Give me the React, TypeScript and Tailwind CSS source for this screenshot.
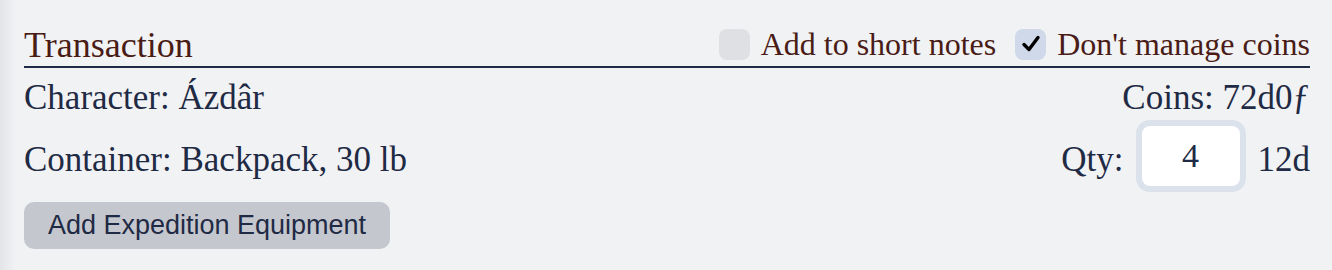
import React from "react";

const serif = { fontFamily: '"Liberation Serif", "DejaVu Serif", serif' };

const Check = ({ checked, label }: { checked: boolean; label: string }) => (
  <label className="flex items-center gap-[11px] cursor-pointer">
    <span
      className={
        checked
          ? "w-[31px] h-[31px] rounded-[8px] bg-[#cfd9ea] flex items-center justify-center"
          : "w-[31px] h-[31px] rounded-[8px] bg-[#dfe0e3]"
      }
    >
      {checked && (
        <svg width="22" height="22" viewBox="0 0 22 22" fill="none">
          <path d="M4 11.5 L9 16.5 L18 4.5" stroke="#000" strokeWidth="3.4" strokeLinecap="round" strokeLinejoin="round" />
        </svg>
      )}
    </span>
    <span className="text-[32px] leading-none text-[#4a1c16]" style={serif}>
      {label}
    </span>
  </label>
);

export default function App() {
  return (
    <div className="w-full h-[270px] bg-[#f1f2f4] flex">
      <div className="w-[16px] h-full bg-gradient-to-r from-[#e2e4e8] to-[#f1f2f4]" />
      <div className="flex-1 pl-[8px] pr-[22px] pt-[22px] text-[#1f2a44]" style={serif}>
        {/* header */}
        <div className="h-[46px] flex items-center justify-between border-b-2 border-[#1f2a44]">
          <h2 className="text-[36px] leading-none text-[#4a1c16] pt-[2px]">Transaction</h2>
          <div className="flex items-center gap-[19px]">
            <Check checked={false} label="Add to short notes" />
            <Check checked={true} label="Don't manage coins" />
          </div>
        </div>

        <div className="h-[52px] flex items-center justify-between pt-[6px] text-[35px] leading-none">
          <span>Character: Ázdâr</span>
          <span>Coins: 72d0ƒ</span>
        </div>

        <div className="h-[72px] flex items-center justify-between text-[35px] leading-none">
          <span className="pt-[6px]">Container: Backpack, 30 lb</span>
          <div className="flex items-center gap-[12px]">
            <span className="pt-[6px]">Qty:</span>
            <input
              readOnly
              value="4"
              className="w-[110px] h-[72px] rounded-[14px] border-[6px] border-[#dce2ec] bg-white text-center text-[34px] text-[#1f2a44] outline-none"
              style={serif}
            />
            <span className="pt-[6px]">12d</span>
          </div>
        </div>

        <button
          className="mt-[10px] h-[47px] w-[366px] rounded-[10px] bg-[#c5c7cf] text-[27px] text-[#1f2a44]"
          style={{ fontFamily: '"Liberation Sans", Arial, sans-serif' }}
        >
          Add Expedition Equipment
        </button>
      </div>
    </div>
  );
}
